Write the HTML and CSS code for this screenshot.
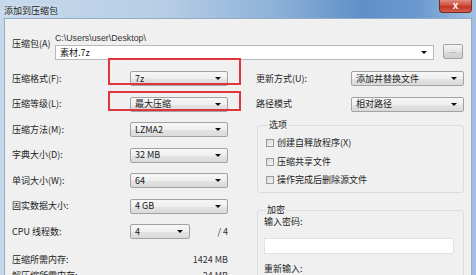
FILE: index.html
```html
<!DOCTYPE html>
<html lang="zh-CN">
<head>
<meta charset="utf-8">
<title>添加到压缩包</title>
<link rel="stylesheet" href="styles.css">
</head>
<body>
<div class="window">
  <div class="titlebar">
    <span class="title">添加到压缩包</span>
    <div class="close">x</div>
  </div>
  <div class="client">
    <div class="archive">
      <div class="archive-lbl">压缩包(A)</div>
      <div class="archive-field">
        <div class="path">C:\Users\user\Desktop\</div>
        <div class="combo edit archive-combo"><span>素材.7z</span><i class="arrow"></i></div>
      </div>
      <div class="dots">...</div>
    </div>
    <div class="columns">
      <div class="left">
        <div class="row"><span class="lbl">压缩格式(F):</span><div class="combo c98"><span>7z</span><i class="arrow"></i></div></div>
        <div class="row"><span class="lbl">压缩等级(L):</span><div class="combo c98"><span>最大压缩</span><i class="arrow"></i></div></div>
        <div class="row"><span class="lbl">压缩方法(M):</span><div class="combo c98"><span>LZMA2</span><i class="arrow"></i></div></div>
        <div class="row"><span class="lbl">字典大小(D):</span><div class="combo c98"><span>32 MB</span><i class="arrow"></i></div></div>
        <div class="row"><span class="lbl">单词大小(W):</span><div class="combo c98"><span>64</span><i class="arrow"></i></div></div>
        <div class="row"><span class="lbl">固实数据大小:</span><div class="combo c98"><span>4 GB</span><i class="arrow"></i></div></div>
        <div class="row"><span class="lbl">CPU 线程数:</span><div class="combo c60"><span>4</span><i class="arrow"></i></div><span class="val">/ 4</span></div>
        <div class="mem">
          <div class="memrow"><span>压缩所需内存:</span><span>1424 MB</span></div>
          <div class="memrow"><span>解压缩所需内存:</span><span>24 MB</span></div>
        </div>
      </div>
      <div class="right">
        <div class="row"><span class="rlbl">更新方式(U):</span><div class="combo c113"><span>添加并替换文件</span><i class="arrow"></i></div></div>
        <div class="row"><span class="rlbl">路径模式</span><div class="combo c113"><span>相对路径</span><i class="arrow"></i></div></div>
        <fieldset class="group opts">
          <legend>选项</legend>
          <div class="chk"><i class="box"></i><span>创建自释放程序(X)</span></div>
          <div class="chk"><i class="box"></i><span>压缩共享文件</span></div>
          <div class="chk"><i class="box"></i><span>操作完成后删除源文件</span></div>
        </fieldset>
        <fieldset class="group enc">
          <legend>加密</legend>
          <div class="plbl">输入密码:</div>
          <div class="pwd"></div>
          <div class="plbl again">重新输入:</div>
        </fieldset>
      </div>
    </div>
  </div>
  <div class="redbox r1"></div>
  <div class="redbox r2"></div>
</div>
</body>
</html>
```
FILE: styles.css
```css
* { box-sizing: border-box; }
html, body { margin: 0; padding: 0; }
body {
  width: 476px; height: 275px; overflow: hidden;
  font-family: "Noto Sans CJK SC", "Liberation Sans", sans-serif;
  font-size: 9px; line-height: 12px; color: #1c1c1c; background: #fff;
}
.window {
  position: relative; width: 476px; height: 275px; overflow: hidden;
  background: linear-gradient(to right, #c6d9ec 0%, #b6cde5 35%, #8db1d8 58%, #5e90c7 76%, #6a99ce 88%, #a3c1e2 100%);
  padding: 0 4px;
  display: flex; flex-direction: column;
}
.titlebar { height: 18px; flex: none; position: relative; display: flex; align-items: center; padding-top: 3px; }
.title { color: #1a1a1a; text-shadow: 0 0 5px rgba(255,255,255,0.9); }
.close {
  position: absolute; right: 0; top: 0; width: 33px; height: 13px;
  background: linear-gradient(#e08a7f 0%, #cf4f40 45%, #c03524 55%, #d2604f 100%);
  border: 1px solid #7a2a22; border-top: none; border-radius: 0 0 4px 4px;
  color: #fff; font-family: "Liberation Sans", sans-serif; font-weight: bold; font-size: 10px;
  line-height: 11px; text-align: center;
}
.client {
  flex: 1; min-height: 0; overflow: hidden; background: #f0f0f0; border: 1px solid #94acc6; border-bottom: none;
  padding: 12.5px 7px 0 7px;
}
.archive { display: flex; align-items: flex-start; }
.archive-lbl { width: 43px; margin-top: 6.5px; }
.archive-field { width: 379px; }
.path { height: 12px; font-family: "Liberation Sans", sans-serif; font-size: 8.8px; color: #333; }
.archive-combo { margin-top: 1.5px; width: 379px; }
.dots {
  margin-left: 9px; margin-top: 12.5px; width: 20px; height: 15px;
  border: 1px solid #a3a3a3; border-radius: 2px;
  background: linear-gradient(#f4f4f4, #e4e4e4 50%, #d9d9d9 51%, #d0d0d0);
  color: #9a9a9a; text-align: center; line-height: 9px; font-size: 8px;
}
.combo {
  position: relative; height: 15px;
  border: 1px solid #a2a2a2; border-radius: 2px;
  background: linear-gradient(#f7f7f7 0%, #efefef 50%, #e4e4e4 51%, #dadada 100%);
  padding-left: 4px; display: flex; align-items: center;
  font-size: 9px; color: #202020;
}
.combo.edit { background: #fff; border-color: #b5b8bd; border-radius: 0; padding-left: 4px; }
.arrow {
  position: absolute; right: 6px; top: 5px; width: 0; height: 0;
  border-left: 3px solid transparent; border-right: 3px solid transparent; border-top: 3px solid #111;
}
.c98 { width: 98px; }
.c60 { width: 60px; }
.c113 { width: 113px; }
.columns { display: flex; margin-top: 11px; gap: 28px; }
.left { width: 216px; display: flex; flex-direction: column; gap: 10.5px; }
.row { display: flex; align-items: center; height: 15px; flex: none; }
.lbl { width: 118px; }
.val { flex: 1; text-align: right; color: #333; }
.mem { margin-top: 4px; display: flex; flex-direction: column; gap: 4px; }
.memrow { display: flex; justify-content: space-between; }
.memrow span:last-child { color: #333; }
.right { width: 209px; display: flex; flex-direction: column; gap: 10.5px; }
.rlbl { width: 95px; }
.group {
  margin: 0; margin-left: 1px; padding: 0 0 6px 8px;
  border: 1px solid #d6dde3; border-radius: 3px;
  display: flex; flex-direction: column; gap: 6.5px;
}
.group legend { padding: 0 1px; margin-left: 2px; line-height: 10px; }
.opts { margin-top: -2px; padding-top: 7px; }
.chk { display: flex; align-items: center; height: 12px; }
.box {
  width: 8px; height: 8px; margin-right: 3px;
  border: 1px solid #9a9a9a;
  background: linear-gradient(135deg, #d9d9d9, #f6f6f6);
}
.enc { margin-top: 1.5px; padding: 0 0 20px 6px; gap: 0; }
.plbl { height: 11px; line-height: 11px; margin-top: 0.5px; }
.pwd { width: 190px; height: 16px; margin-top: 11px; background: #fff; border: 1px solid #e2e2e2; }
.plbl.again { margin-top: 9px; }
.redbox { position: absolute; left: 108px; width: 133px; border: 2px solid #e0353c; }
.r1 { top: 58px; height: 27px; }
.r2 { top: 91px; height: 20px; }
```
